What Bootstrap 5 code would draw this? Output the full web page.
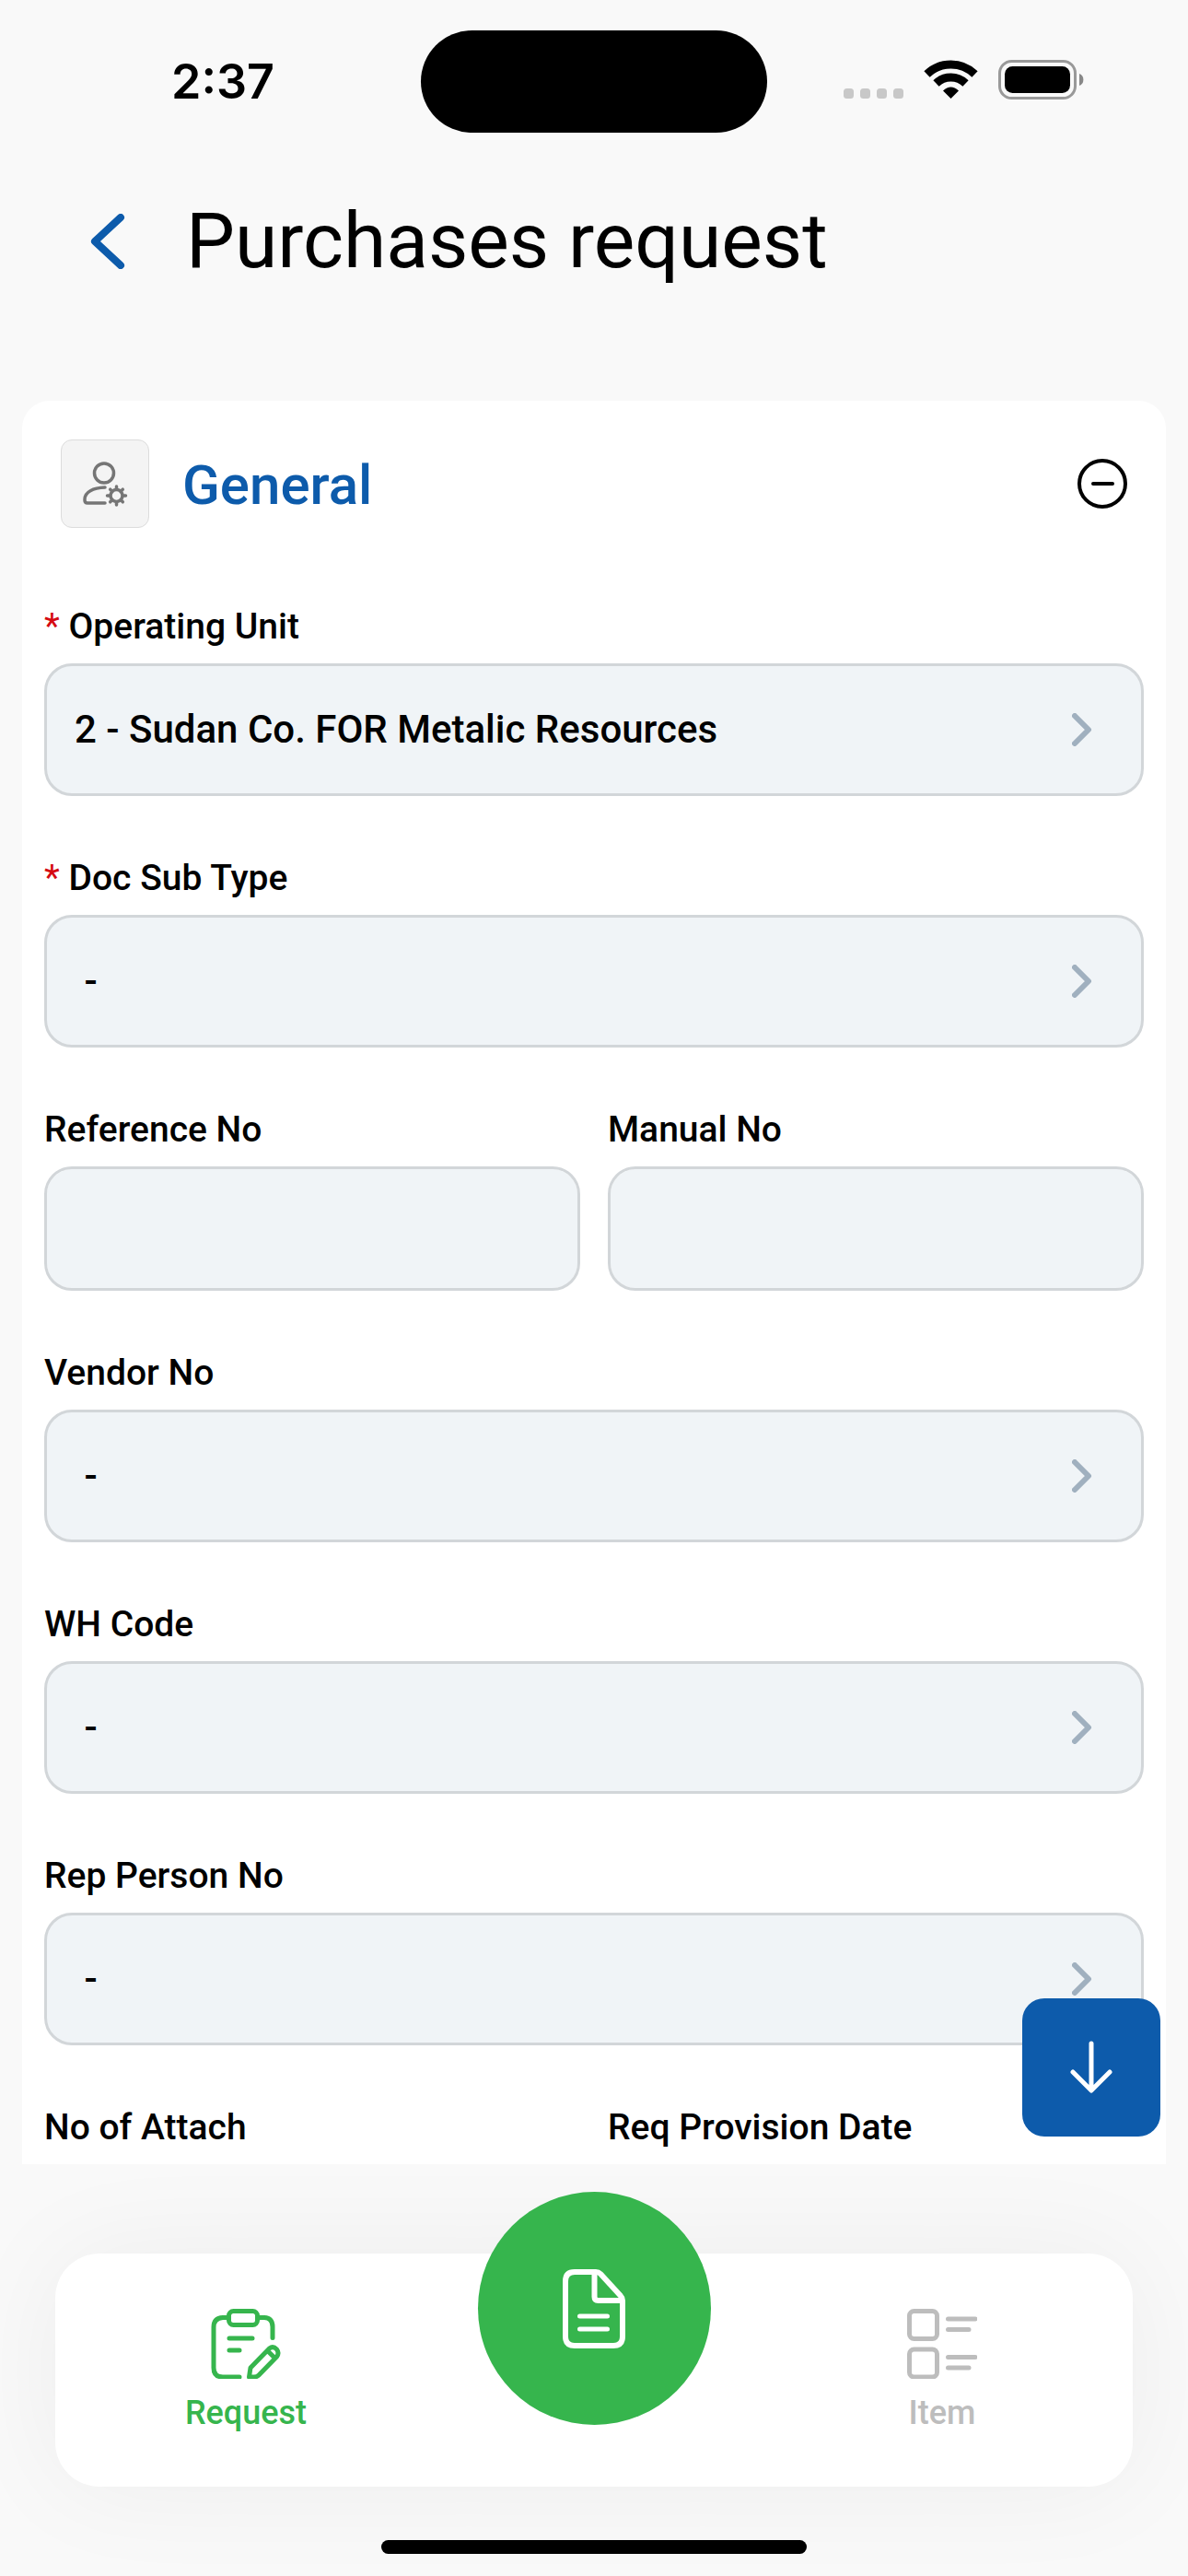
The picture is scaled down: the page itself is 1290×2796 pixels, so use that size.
<!DOCTYPE html>
<html lang="en">
<head>
<meta charset="utf-8">
<meta name="viewport" content="width=device-width, initial-scale=1">
<title>Purchases request</title>
<link href="https://cdn.jsdelivr.net/npm/bootstrap@5.3.0/dist/css/bootstrap.min.css" rel="stylesheet">
<style>
  :root { --brand: #0d5bab; --go: #36b54d; --idle: #bdbdbd; --page: #f9f9f9; }
  body { background: var(--page); color: #000; font-family: Roboto, "Liberation Sans", sans-serif; }
  svg { display: block; flex: none; }
  .status-bar { display: grid; grid-template-columns: minmax(0, 1fr) auto minmax(0, 1fr); padding-top: 33px; }
  .status-time { font: 600 52px/60px Inter, "Liberation Sans", sans-serif; padding-left: 186px; }
  .status-icons { padding-right: 112px; }
  .island { width: 376px; height: 111px; background: #000; }
  .app-bar { padding: 68px 72px 123px 72px; gap: 42px; }
  .app-bar h1 { font-size: 84px; line-height: 100px; font-weight: 400; }
  .back-btn { width: 88px; height: 100px; }
  .pane { min-height: 0; }
  .content { min-height: 0; padding: 0 24px; }
  .sheet { background: #fff; border-radius: 30px 30px 0 0; padding: 42px 24px 0; }
  .sheet-head { padding: 0 18px; margin-bottom: 84px; gap: 36px; }
  .sheet-icon { width: 96px; height: 96px; background: #f4f4f4; border: 1px solid #dcdcdc; border-radius: 12px; }
  .sheet-title { color: var(--brand); font-size: 60px; line-height: 72px; font-weight: 500; }
  .field { margin-bottom: 66px; }
  .field .form-label { display: block; margin-bottom: 17px; font-size: 39px; line-height: 46px; font-weight: 500; white-space: nowrap; }
  .req { color: #d50a12; font-weight: 400; }
  .field .form-control, .field .form-select { background-color: #f0f4f7; border: 3px solid #d2d6d9; border-radius: 30px; color: #000; font-size: 42px; font-weight: 500; line-height: 48px; }
  .field .form-select { height: 144px; padding: 0 120px 0 30px;
    background-image: url("data:image/svg+xml,%3Csvg xmlns='http://www.w3.org/2000/svg' viewBox='0 0 22 36'%3E%3Cpath d='M3 3l15 15L3 33' fill='none' stroke='%23a0b0bf' stroke-width='6' stroke-linecap='round' stroke-linejoin='round'/%3E%3C/svg%3E");
    background-size: 22px 36px; background-position: right 53px center; }
  .field .form-control { height: 135px; padding: 0 30px; }
  .pair { --bs-gutter-x: 30px; }
  .jump-btn { right: 30px; bottom: 30px; width: 150px; height: 150px; background: var(--brand); border-radius: 24px; }
  .dock { padding: 97px 60px 24px; }
  .tab-bar { height: 253px; background: #fff; border-radius: 48px; padding: 0 18px; box-shadow: 0 0 120px rgba(0,0,0,.05); }
  .tab-slot { flex: 1 1 0; }
  .tab-link { gap: 16px; font-size: 36px; line-height: 42px; font-weight: 500; color: var(--idle); text-decoration: none; }
  .tab-link.active { color: var(--go); }
  .doc-btn { width: 253px; height: 253px; background: var(--go); margin-top: -67px; }
  .home-line { width: 462px; height: 15px; background: #000; margin-top: 58px; }
</style>
</head>
<body>
<div class="vh-100 d-flex flex-column overflow-hidden">

  <div class="status-bar align-items-center">
    <div class="status-time">2:37</div>
    <div class="island rounded-pill"></div>
    <div class="status-icons d-flex justify-content-end">
      <svg width="262" height="48" viewBox="916 65 262 48" aria-hidden="true">
        <g fill="#c8c8c8"><rect x="916" y="96" width="11" height="11" rx="3.5"/><rect x="934" y="96" width="11" height="11" rx="3.5"/><rect x="952" y="96" width="11" height="11" rx="3.5"/><rect x="970" y="96" width="11" height="11" rx="3.5"/></g>
        <g fill="none" stroke="#000" stroke-width="9"><path d="M1006.500 80.500a37.500 37.500 0 0 1 52 0"/><path d="M1016.500 90.500a23 23 0 0 1 32 0"/></g>
        <path d="M1024 98.500q8.500-8 17 0l-8.500 8.500z"/>
        <rect x="1085.500" y="66.500" width="82" height="40" rx="13" fill="none" stroke="#999" stroke-width="3"/>
        <rect x="1091" y="72" width="71" height="29" rx="8.500"/>
        <path d="M1172 80a7 7 0 0 1 0 13z" fill="#888"/>
      </svg>
    </div>
  </div>

  <header class="app-bar d-flex align-items-center">
    <button type="button" class="back-btn btn p-0 border-0 d-flex align-items-center justify-content-center" aria-label="Back">
      <svg width="40" height="60" viewBox="0 0 40 60" fill="none" stroke="#0d5bab" stroke-width="8" stroke-linecap="round" stroke-linejoin="round"><path d="M35 4L7 30l28 26"/></svg>
    </button>
    <h1 class="m-0">Purchases request</h1>
  </header>

  <main class="pane position-relative flex-fill d-flex flex-column">
    <div class="content flex-fill overflow-hidden">
      <form class="sheet">
        <div class="sheet-head d-flex align-items-center">
          <span class="sheet-icon d-flex align-items-center justify-content-center">
            <svg width="50" height="50" viewBox="0 0 50 50" fill="none" stroke="#757575" stroke-width="3.500" stroke-linecap="round" stroke-linejoin="round">
              <circle cx="24" cy="13.500" r="10.500"/>
              <path d="M25 29C12 29.500 3 34 3 42v1q0 3 3 3h19"/>
              <circle cx="37.500" cy="38" r="6.500"/>
              <path d="M37.500 31v-3M37.500 48v-3M30.500 38h-3M47.500 38h-3M32.800 33.300l-2.100-2.100M44.300 44.800l-2.100-2.100M32.800 42.700l-2.100 2.100M44.300 31.200l-2.100 2.100"/>
            </svg>
          </span>
          <h2 class="sheet-title flex-fill m-0 pt-1">General</h2>
          <button type="button" class="btn p-0 border-0" aria-label="Collapse section">
            <svg width="54" height="54" viewBox="0 0 54 54" fill="none" stroke="#000" stroke-width="4" stroke-linecap="round"><circle cx="27" cy="27" r="25"/><path d="M17 27h21"/></svg>
          </button>
        </div>

        <div class="field">
          <label class="form-label" for="unit"><span class="req">*</span> Operating Unit</label>
          <select class="form-select" id="unit"><option>2 - Sudan Co. FOR Metalic Resources</option></select>
        </div>
        <div class="field">
          <label class="form-label" for="subtype"><span class="req">*</span> Doc Sub Type</label>
          <select class="form-select" id="subtype"><option>&nbsp;-</option></select>
        </div>
        <div class="row pair">
          <div class="col-6"><div class="field">
            <label class="form-label" for="ref">Reference No</label>
            <input class="form-control" id="ref" type="text">
          </div></div>
          <div class="col-6"><div class="field">
            <label class="form-label" for="manual">Manual No</label>
            <input class="form-control" id="manual" type="text">
          </div></div>
        </div>
        <div class="field">
          <label class="form-label" for="vendor">Vendor No</label>
          <select class="form-select" id="vendor"><option>&nbsp;-</option></select>
        </div>
        <div class="field">
          <label class="form-label" for="wh">WH Code</label>
          <select class="form-select" id="wh"><option>&nbsp;-</option></select>
        </div>
        <div class="field">
          <label class="form-label" for="rep">Rep Person No</label>
          <select class="form-select" id="rep"><option>&nbsp;-</option></select>
        </div>
        <div class="row pair">
          <div class="col-6"><div class="field">
            <label class="form-label" for="attach">No of Attach</label>
            <input class="form-control" id="attach" type="text">
          </div></div>
          <div class="col-6"><div class="field">
            <label class="form-label" for="date">Req Provision Date</label>
            <input class="form-control" id="date" type="text">
          </div></div>
        </div>
      </form>
    </div>
    <button type="button" class="jump-btn btn p-0 border-0 position-absolute d-flex align-items-center justify-content-center" aria-label="Scroll down">
      <svg width="46" height="58" viewBox="0 0 46 58" fill="none" stroke="#fff" stroke-width="5" stroke-linecap="round" stroke-linejoin="round"><path d="M23 3v50M3 34l20 20 20-20"/></svg>
    </button>
  </main>

  <footer class="dock flex-shrink-0 overflow-hidden">
    <nav class="tab-bar d-flex" aria-label="Sections">
      <a href="#request" class="tab-slot tab-link active d-flex flex-column align-items-center justify-content-center">
        <svg width="76" height="76" viewBox="0 0 76 76" fill="none" stroke="currentColor" stroke-width="5" stroke-linecap="round" stroke-linejoin="round">
          <rect x="19.500" y="2.500" width="31" height="15" rx="5"/>
          <path d="M19 9.500h-6Q3 10 3 20v44q0 10 10 10h18M52 9.500h6q9 .5 9 10v12"/>
          <path d="M20 32h25M20 45h11"/>
          <path d="M41.500 74L43 64l20.500-21q4-3 8 1 3 4 0 8L52 72q-2 2-5 2zM62 46l7 7"/>
        </svg>
        Request
      </a>
      <div class="tab-slot d-flex justify-content-center">
        <button type="button" class="doc-btn btn rounded-circle p-0 border-0 d-flex align-items-center justify-content-center" aria-label="New document">
          <svg width="68" height="86" viewBox="0 0 68 86" fill="none" stroke="#fff" stroke-width="6" stroke-linecap="round" stroke-linejoin="round">
            <path d="M13 3h23q3 0 5 2l22 24q2 2 2 5v39q0 10-10 10H13Q3 83 3 73V13Q3 3 13 3z"/>
            <path d="M34.500 4v26q0 4 4 4H64"/>
            <path d="M18.500 51h30M18.500 65h30" stroke-width="5"/>
          </svg>
        </button>
      </div>
      <a href="#item" class="tab-slot tab-link d-flex flex-column align-items-center justify-content-center">
        <svg width="76" height="76" viewBox="0 0 76 76" fill="none" stroke="currentColor" stroke-width="5" stroke-linecap="round">
          <rect x="2.500" y="2.500" width="30" height="30" rx="5"/>
          <rect x="2.500" y="44" width="30" height="30" rx="5"/>
          <path d="M44.500 11H74M44.500 22.500H67M44.500 52.500H74M44.500 64H67"/>
        </svg>
        Item
      </a>
    </nav>
    <div class="home-line rounded-pill mx-auto"></div>
  </footer>
</div>
<script src="https://cdn.jsdelivr.net/npm/bootstrap@5.3.0/dist/js/bootstrap.bundle.min.js"></script>
</body>
</html>
